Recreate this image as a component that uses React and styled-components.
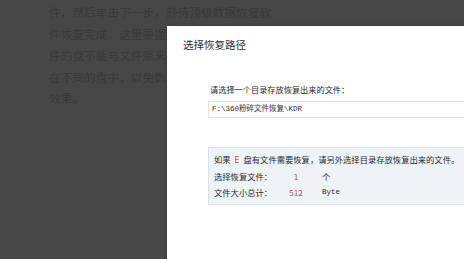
import React from "react";
import styled, { createGlobalStyle } from "styled-components";

const GlobalStyle = createGlobalStyle`
  html, body {
    margin: 0;
    padding: 0;
    width: 464px;
    height: 259px;
    overflow: hidden;
    background: #474747;
  }
`;

const Page = styled.div`
  position: relative;
  width: 464px;
  height: 259px;
  overflow: hidden;
  background: #474747;
  font-family: "Noto Sans CJK SC", "Noto Sans", sans-serif;
`;

const Article = styled.div`
  padding: 1px 0 0 49px;
  color: #393939;
  font-size: 11.7px;
  line-height: 21.5px;
  white-space: nowrap;
`;

const Line = styled.div``;

const Dialog = styled.div`
  position: absolute;
  left: 167px;
  top: 26px;
  width: 420px;
  height: 300px;
  background: #fff;
  box-shadow: 0 0 3px rgba(0, 0, 0, 0.35);
`;

const Title = styled.div`
  padding: 12px 16px 0;
  font-size: 10.5px;
  line-height: 14px;
  color: #2e2e2e;
`;

const Body = styled.div`
  padding: 32px 0 0 41px;
`;

const Label = styled.div`
  font-size: 8.2px;
  line-height: 11px;
  color: #2a2a2a;
  margin-left: 2px;
`;

const PathBox = styled.div`
  margin-top: 6px;
  width: 320px;
  height: 15px;
  border: 1px solid #e2e2e2;
  padding-left: 3px;
  font-family: "Liberation Mono", "Noto Sans CJK SC", monospace;
  font-size: 7.5px;
  line-height: 14px;
  color: #333;
`;

const InfoBox = styled.div`
  margin-top: 29px;
  width: 320px;
  background: #edf3f7;
  border: 1px solid #d6e2ea;
  padding: 3px 5px 3px;
  font-size: 8.3px;
  line-height: 16.5px;
  color: #2a2a2a;
  white-space: nowrap;
`;

const Red = styled.span`
  color: #d24c4c;
  margin: ${(p) => (p.$gap ? "0 4px" : "0")};
`;

const Row = styled.div`
  display: grid;
  grid-template-columns: 68px 28px auto;
`;

const Value = styled.span`
  color: #d24c4c;
  text-align: center;
`;

const Unit = styled.span`
  padding-left: 12px;
  font-family: ${(p) => (p.$mono ? '"Liberation Mono", monospace' : "inherit")};
  font-size: ${(p) => (p.$mono ? "7.5px" : "8.3px")};
`;

export default function App() {
  return (
    <>
      <GlobalStyle />
      <Page>
        <Article>
          <Line>件，然后单击下一步，静待顶级数据恢复软</Line>
          <Line>件恢复完成。这里要提</Line>
          <Line>件的盘不能与文件原来</Line>
          <Line>在不同的盘中，以免数</Line>
          <Line>效果。</Line>
        </Article>
        <Dialog>
          <Title>选择恢复路径</Title>
          <Body>
            <Label>请选择一个目录存放恢复出来的文件：</Label>
            <PathBox>F:\360粉碎文件恢复\KDR</PathBox>
            <InfoBox>
              <div>
                如果<Red $gap>E</Red>盘有文件需要恢复，请另外选择目录存放恢复出来的文件。
              </div>
              <Row>
                <span>选择恢复文件：</span>
                <Value>1</Value>
                <Unit>个</Unit>
              </Row>
              <Row>
                <span>文件大小总计：</span>
                <Value>512</Value>
                <Unit $mono>Byte</Unit>
              </Row>
            </InfoBox>
          </Body>
        </Dialog>
      </Page>
    </>
  );
}
